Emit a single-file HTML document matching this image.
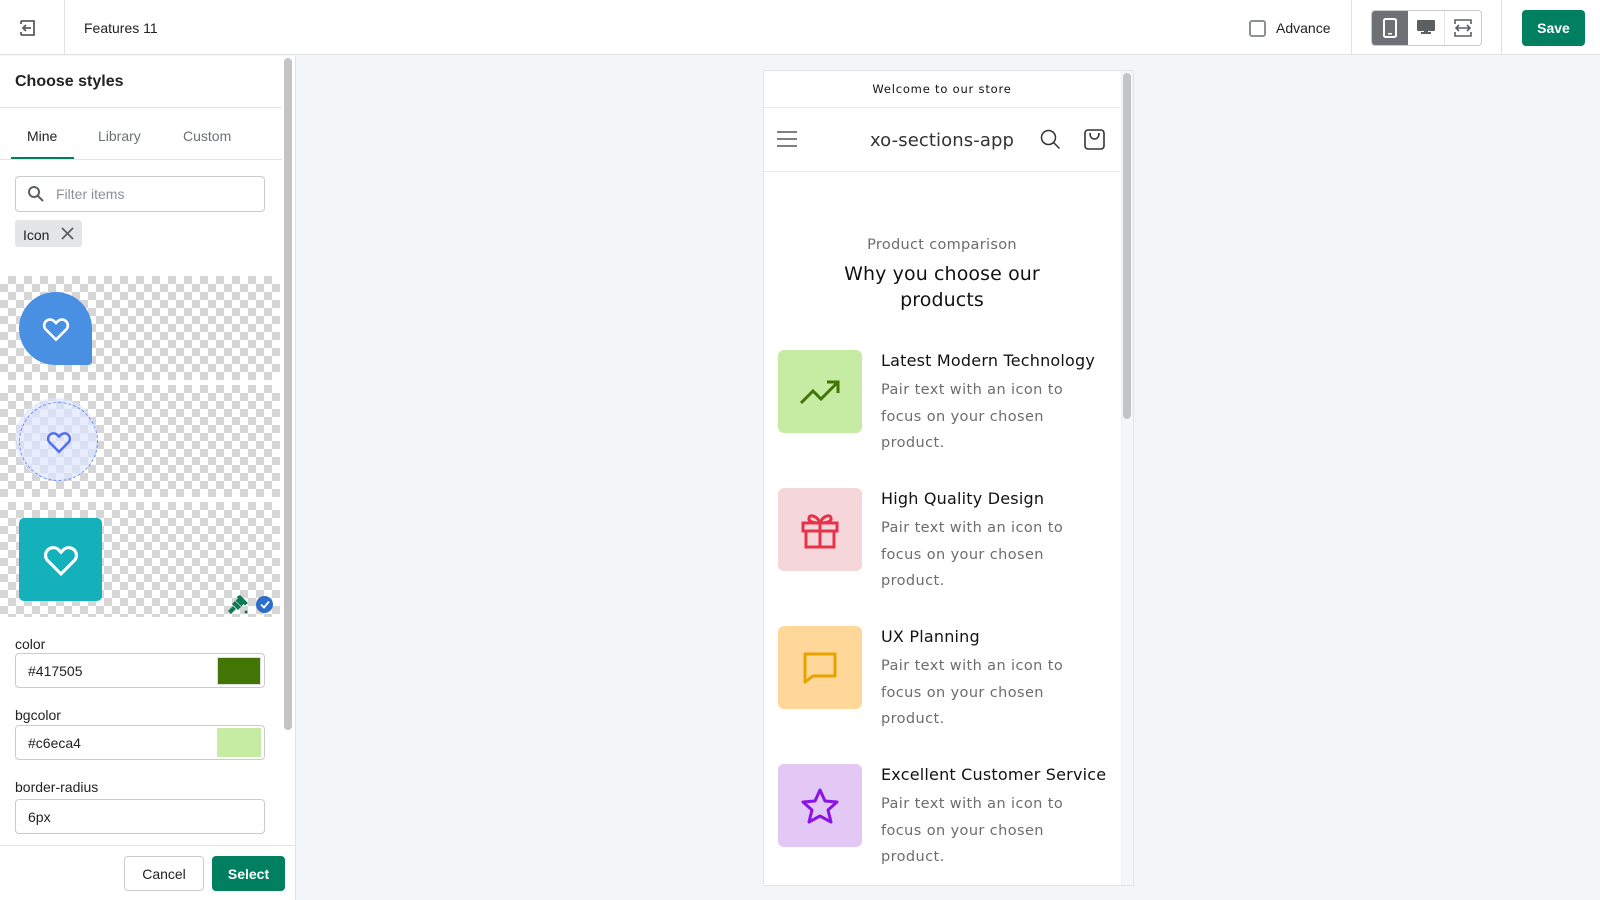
<!DOCTYPE html>
<html><head><meta charset="utf-8"><style>
*{box-sizing:border-box;margin:0;padding:0}
body{width:1600px;height:900px;overflow:hidden;background:#f4f5f7;font-family:"Liberation Sans",sans-serif;color:#202223;position:relative}
.abs{position:absolute}
.hdr{left:0;top:0;width:1600px;height:55px;background:#fff;border-bottom:1px solid #e1e3e5}
.left{left:0;top:56px;width:296px;height:844px;background:#fff;border-right:1px solid #e1e3e5}
.checker{background-color:#fff;background-image:linear-gradient(45deg,#d6d6d6 25%,transparent 25%,transparent 75%,#d6d6d6 75%),linear-gradient(45deg,#d6d6d6 25%,transparent 25%,transparent 75%,#d6d6d6 75%);background-size:16px 16px;background-position:0 0,8px 8px}
.inp{border:1px solid #c9cccf;border-radius:4px;background:#fff;font-size:14px;padding-left:12px;display:flex;align-items:center}
.lbl{font-size:14px;color:#202223}
.pv{font-family:"DejaVu Sans","Liberation Sans",sans-serif}
.it .box{position:absolute;left:778px;width:84px;height:83px;border-radius:6px;display:flex;align-items:center;justify-content:center}
.t{position:absolute;left:881px;font-size:16px;color:#121212;letter-spacing:.2px}
.d{position:absolute;left:881px;font-size:14.5px;color:#6d6d6d;line-height:26.5px;letter-spacing:.4px;width:230px}
</style></head><body>
<div class="abs hdr"></div>
<svg class="abs" style="left:17px;top:18px" width="20" height="20" viewBox="0 0 20 20" fill="none" stroke="#5c5f62" stroke-width="1.8"><path d="M4 3h13v14H4M4 3v3M4 17v-3M14 10H6M9 7l-3 3 3 3"/></svg>
<div class="abs" style="left:64px;top:0;width:1px;height:55px;background:#e1e3e5"></div>
<div class="abs" style="left:84px;top:20px;font-size:14px">Features 11</div>
<div class="abs" style="left:1249px;top:20px;width:17px;height:17px;border:2px solid #8c9196;border-radius:3px"></div>
<div class="abs" style="left:1276px;top:20px;font-size:14px;color:#202223">Advance</div>
<div class="abs" style="left:1351px;top:0;width:1px;height:55px;background:#e1e3e5"></div>
<div class="abs" style="left:1371px;top:10px;width:111px;height:36px;border:1px solid #c9cccf;border-radius:4px;background:#fff;overflow:hidden;display:flex">
 <div style="width:37px;height:100%;background:#6d7175;display:flex;align-items:center;justify-content:center"><svg width="14" height="20" viewBox="0 0 14 20"><rect x="1" y="1" width="12" height="18" rx="1.5" fill="none" stroke="#fff" stroke-width="2"/><rect x="5" y="15" width="4" height="1.5" fill="#fff"/></svg></div>
 <div style="width:37px;border-right:1px solid #e1e3e5;display:flex;align-items:center;justify-content:center"><svg width="18" height="16" viewBox="0 0 18 16"><rect x="0" y="0" width="18" height="11" rx="1" fill="#5c5f62"/><rect x="4" y="12" width="10" height="2" fill="#5c5f62"/><rect x="7" y="10" width="4" height="3" fill="#5c5f62"/></svg></div>
 <div style="width:37px;display:flex;align-items:center;justify-content:center"><svg width="18" height="18" viewBox="0 0 18 18" fill="none" stroke="#5c5f62" stroke-width="1.6"><path d="M1 5V1h16v4M1 13v4h16v-4M2 9h14M5 6L2 9l3 3M13 6l3 3-3 3"/></svg></div>
</div>
<div class="abs" style="left:1501px;top:0;width:1px;height:55px;background:#e1e3e5"></div>
<div class="abs" style="left:1522px;top:10px;width:63px;height:36px;background:#008060;border-radius:4px;color:#fff;font-size:14px;font-weight:bold;display:flex;align-items:center;justify-content:center">Save</div>

<div class="abs left"></div>
<div class="abs" style="left:15px;top:73px;font-size:16px;font-weight:bold">Choose styles</div>
<div class="abs" style="left:0;top:107px;width:282px;height:1px;background:#e1e3e5"></div>
<div class="abs" style="left:27px;top:128px;font-size:14px">Mine</div>
<div class="abs" style="left:98px;top:128px;font-size:14px;color:#6d7175">Library</div>
<div class="abs" style="left:183px;top:128px;font-size:14px;color:#6d7175">Custom</div>
<div class="abs" style="left:11px;top:157px;width:63px;height:3px;background:#008060"></div>
<div class="abs" style="left:0;top:159px;width:282px;height:1px;background:#e1e3e5"></div>
<div class="abs inp" style="left:15px;top:176px;width:250px;height:36px;padding-left:40px;color:#8c9196">Filter items</div>
<svg class="abs" style="left:27px;top:185px" width="18" height="18" viewBox="0 0 18 18" fill="none" stroke="#5c5f62" stroke-width="2"><circle cx="7" cy="7" r="5"/><path d="M11 11l5 5"/></svg>
<div class="abs" style="left:15px;top:220px;width:67px;height:27px;background:#e4e5e7;border-radius:3px;font-size:14px;padding:7px 0 0 8px">Icon</div>
<svg class="abs" style="left:61px;top:227px" width="13" height="13" viewBox="0 0 13 13" stroke="#5c5f62" stroke-width="1.8"><path d="M1 1l11 11M12 1L1 12"/></svg>

<div class="abs checker" style="left:0;top:276px;width:280px;height:104px"></div>
<div class="abs checker" style="left:0;top:385px;width:280px;height:112px"></div>
<div class="abs checker" style="left:0;top:502px;width:280px;height:115px"></div>
<div class="abs" style="left:19px;top:292px;width:73px;height:73px;background:#4a90e2;border-radius:50% 50% 4px 50%;display:flex;align-items:center;justify-content:center"><svg width="30" height="26" viewBox="0 0 24 22" fill="none" stroke="#fff" stroke-width="2.2"><path d="M12 20L3 11a5 5 0 017-7l2 2 2-2a5 5 0 017 7z"/></svg></div>
<div class="abs" style="left:15px;top:398px;width:83px;height:83px;border-radius:50%;background:rgba(220,228,255,.65)"></div>
<div class="abs" style="left:19px;top:402px;width:79px;height:79px;border-radius:50%;border:1px dashed #6f8ff0;display:flex;align-items:center;justify-content:center"><svg width="28" height="24" viewBox="0 0 24 22" fill="none" stroke="#4d6cf0" stroke-width="2.2"><path d="M12 20L3 11a5 5 0 017-7l2 2 2-2a5 5 0 017 7z"/></svg></div>
<div class="abs" style="left:19px;top:518px;width:83px;height:83px;background:#14b1bb;border-radius:5px;display:flex;align-items:center;justify-content:center"><svg width="38" height="34" viewBox="0 0 24 22" fill="none" stroke="#fff" stroke-width="2"><path d="M12 20L3 11a5 5 0 017-7l2 2 2-2a5 5 0 017 7z"/></svg></div>
<svg class="abs" style="left:228px;top:594px" width="21" height="21" viewBox="0 0 21 21" fill="#0b7a55"><path d="M12 1l8 8-3 2.5-1.5-1.5-2 2.5-6-6 2.5-2-1.5-1.5z"/><path d="M7 7l6 6-3 3-6-6z"/><path d="M5 12l3 3-5 5-3-3z"/><circle cx="18" cy="18" r="1.5"/></svg>
<div class="abs" style="left:256px;top:596px;width:17px;height:17px;border-radius:50%;background:#2c6ecb"></div>
<svg class="abs" style="left:260px;top:600px" width="10" height="9" viewBox="0 0 10 9" fill="none" stroke="#fff" stroke-width="1.8"><path d="M1 4.5l3 3 5-6"/></svg>
<div class="abs" style="left:284px;top:58px;width:8px;height:672px;background:#c4c4c4;border-radius:4px"></div>

<div class="abs lbl" style="left:15px;top:636px">color</div>
<div class="abs inp" style="left:15px;top:653px;width:250px;height:35px">#417505</div>
<div class="abs" style="left:217px;top:657px;width:44px;height:28px;background:#417505;border:1px solid #ddd"></div>
<div class="abs lbl" style="left:15px;top:707px">bgcolor</div>
<div class="abs inp" style="left:15px;top:725px;width:250px;height:35px">#c6eca4</div>
<div class="abs" style="left:217px;top:728px;width:44px;height:29px;background:#c6eca4"></div>
<div class="abs lbl" style="left:15px;top:779px">border-radius</div>
<div class="abs inp" style="left:15px;top:799px;width:250px;height:35px">6px</div>
<div class="abs" style="left:0;top:845px;width:296px;height:1px;background:#e1e3e5"></div>
<div class="abs" style="left:124px;top:856px;width:80px;height:35px;border:1px solid #c9cccf;border-radius:4px;background:#fff;font-size:14px;display:flex;align-items:center;justify-content:center">Cancel</div>
<div class="abs" style="left:212px;top:856px;width:73px;height:35px;border-radius:4px;background:#008060;color:#fff;font-size:14px;font-weight:bold;display:flex;align-items:center;justify-content:center">Select</div>

<div class="abs pv" style="left:763px;top:70px;width:371px;height:816px;background:#fff;border:1px solid #e1e3e5;overflow:hidden">
</div>
<div class="abs" style="left:1121px;top:71px;width:12px;height:814px;background:#f5f6f7;border-left:1px solid #eee"></div>
<div class="abs" style="left:1123px;top:73px;width:8px;height:346px;background:#c4c4c4;border-radius:4px"></div>
<div class="pv">
<div class="abs" style="left:764px;top:82px;width:356px;text-align:center;font-size:11.5px;letter-spacing:.8px;color:#121212">Welcome to our store</div>
<div class="abs" style="left:764px;top:107px;width:356px;height:1px;background:#e8e8e8"></div>
<svg class="abs" style="left:777px;top:131px" width="20" height="16" viewBox="0 0 20 16" stroke="#555" stroke-width="1.5"><path d="M0 1h20M0 8h20M0 15h20"/></svg>
<div class="abs" style="left:764px;top:130px;width:356px;text-align:center;font-size:18px;color:#333;letter-spacing:.1px">xo-sections-app</div>
<svg class="abs" style="left:1040px;top:129px" width="21" height="21" viewBox="0 0 21 21" fill="none" stroke="#333" stroke-width="1.5"><circle cx="8.5" cy="8.5" r="7"/><path d="M13.5 13.5l6 6"/></svg>
<svg class="abs" style="left:1084px;top:129px" width="21" height="21" viewBox="0 0 21 21" fill="none" stroke="#333" stroke-width="1.6"><rect x="1" y="1" width="19" height="19" rx="3"/><path d="M6 4c0 4 2 6 4.5 6S15 8 15 4"/></svg>
<div class="abs" style="left:764px;top:171px;width:356px;height:1px;background:#e8e8e8"></div>
<div class="abs" style="left:764px;top:237px;width:356px;text-align:center;font-size:14.5px;color:#6d6d6d;letter-spacing:.3px">Product comparison</div>
<div class="abs" style="left:800px;top:261px;width:284px;text-align:center;font-size:19px;color:#121212;line-height:26px;letter-spacing:.1px">Why you choose our products</div>

<div class="it">
<div class="box" style="top:350px;background:#c6eca4"><svg width="42" height="26" viewBox="0 0 42 26" fill="none" stroke="#417505" stroke-width="3"><path d="M2 24l12-12 8 8L39 3M28 3h11v11"/></svg></div>
<div class="t" style="top:351px">Latest Modern Technology</div>
<div class="d" style="top:377px">Pair text with an icon to<br>focus on your chosen<br>product.</div>

<div class="box" style="top:488px;background:#f5d6db"><svg width="38" height="38" viewBox="0 0 38 38" fill="none" stroke="#e5344a" stroke-width="3"><rect x="2" y="12" width="34" height="8"/><rect x="5" y="20" width="28" height="16"/><path d="M19 12v24M19 12c-2-6-10-10-11-5s9 5 11 5c2 0 12 0 11-5s-9-1-11 5"/></svg></div>
<div class="t" style="top:489px">High Quality Design</div>
<div class="d" style="top:515px">Pair text with an icon to<br>focus on your chosen<br>product.</div>

<div class="box" style="top:626px;background:#ffd899"><svg width="36" height="34" viewBox="0 0 36 34" fill="none" stroke="#e8a300" stroke-width="3"><path d="M3 3h30v22H11l-8 6z" stroke-linejoin="round"/></svg></div>
<div class="t" style="top:627px">UX Planning</div>
<div class="d" style="top:653px">Pair text with an icon to<br>focus on your chosen<br>product.</div>

<div class="box" style="top:764px;background:#e3c7f5"><svg width="38" height="36" viewBox="0 0 38 36" fill="none" stroke="#8a14e8" stroke-width="3" stroke-linejoin="round"><path d="M19 2l5 11 12 1-9 8 3 12-11-6-11 6 3-12-9-8 12-1z"/></svg></div>
<div class="t" style="top:765px">Excellent Customer Service</div>
<div class="d" style="top:791px">Pair text with an icon to<br>focus on your chosen<br>product.</div>
</div>
</div>
</body></html>
